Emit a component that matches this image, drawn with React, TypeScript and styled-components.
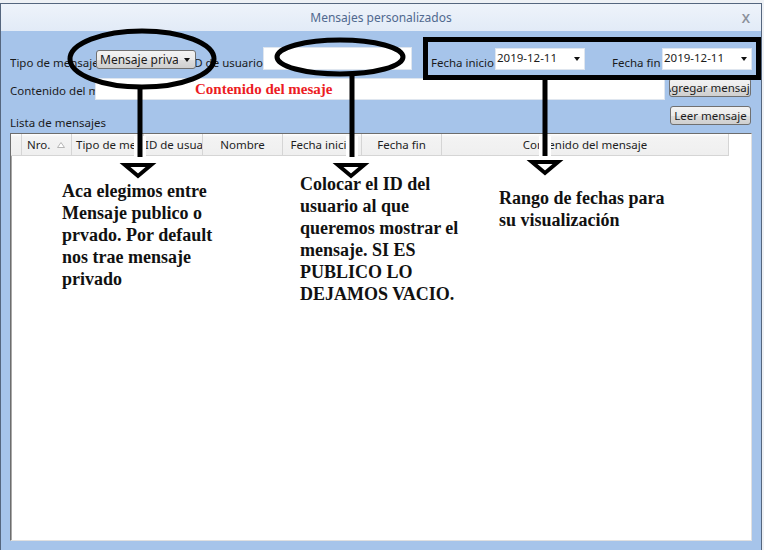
import styled, { createGlobalStyle } from "styled-components";

const GlobalStyle = createGlobalStyle`
  html, body {
    margin: 0;
    padding: 0;
  }
  body {
    background: #eef1f5;
    font-family: "Noto Sans", "Liberation Sans", sans-serif;
  }
`;

// page + dialog frame
const Stage = styled.div`
  position: relative;
  width: 764px;
  height: 550px;
  overflow: hidden;
  padding-top: 3px;
  box-sizing: border-box;
`;

const Window = styled.div`
  width: 762px;
  height: 560px;
  box-sizing: border-box;
  border: 1px solid #55667e;
  border-bottom: none;
  background: #a6c4ea;
  display: flex;
  flex-direction: column;
`;

const TitleBar = styled.div`
  height: 27px;
  flex: none;
  display: flex;
  align-items: center;
  justify-content: center;
  position: relative;
  background: linear-gradient(#eef3fa, #e2ebf7);
  color: #50698f;
  font-size: 12px;
`;

const CloseX = styled.span`
  position: absolute;
  right: 11px;
  top: 5px;
  color: #8b919b;
  font-size: 13px;
  font-weight: 600;
`;

const Client = styled.div`
  flex: 1;
  padding: 16px 9px 0 9px;
  display: flex;
  flex-direction: column;
  font-size: 11.5px;
  color: #1b1b1b;
`;

const Row = styled.div<{ $h: number; $mt: number }>`
  display: flex;
  align-items: flex-start;
  height: ${(p) => p.$h}px;
  margin-top: ${(p) => p.$mt}px;
`;

const Label = styled.div<{ $w?: number; $dy: number; $ml?: number; $right?: boolean }>`
  flex: none;
  ${(p) => (p.$w ? `width: ${p.$w}px;` : "")}
  margin-left: ${(p) => p.$ml ?? 0}px;
  padding-top: ${(p) => p.$dy}px;
  line-height: 15px;
  white-space: nowrap;
  overflow: hidden;
  display: flex;
  justify-content: ${(p) => (p.$right ? "flex-end" : "flex-start")};
`;

const Combo = styled.div`
  flex: none;
  position: relative;
  z-index: 1;
  width: 100px;
  height: 19px;
  margin-top: 3px;
  box-sizing: border-box;
  border: 1px solid #707070;
  border-radius: 3px;
  background: linear-gradient(#f3f3f3 0%, #ebebeb 50%, #dddddd 51%, #cfcfcf 100%);
  display: flex;
  align-items: center;
  padding-left: 3px;
  font-size: 12px;
  white-space: nowrap;
  overflow: hidden;
`;

const ComboText = styled.span`
  width: 78px;
  overflow: hidden;
`;

const Arrow = styled.span`
  flex: none;
  width: 0;
  height: 0;
  border-left: 3.5px solid transparent;
  border-right: 3.5px solid transparent;
  border-top: 4px solid #111;
  margin-left: auto;
  margin-right: 5px;
`;

const TextBox = styled.div<{ $w: number; $h: number }>`
  flex: none;
  width: ${(p) => p.$w}px;
  height: ${(p) => p.$h}px;
  box-sizing: border-box;
  background: #fff;
  border: 1px solid #dfe6ef;
`;

const DatePicker = styled.div`
  flex: none;
  width: 90px;
  height: 22px;
  margin-top: 1px;
  box-sizing: border-box;
  background: #fff;
  border: 1px solid #dfe6ef;
  display: flex;
  align-items: flex-start;
  padding: 1px 0 0 1px;
  font-size: 11.5px;
  line-height: 15px;
`;

const DateArrow = styled(Arrow)`
  margin-top: 7px;
  margin-right: 4px;
`;

const WinButton = styled.div<{ $w: number; $ml?: number }>`
  flex: none;
  width: ${(p) => p.$w}px;
  height: 19px;
  margin-left: ${(p) => (p.$ml === undefined ? "auto" : `${p.$ml}px`)};
  margin-right: 1px;
  box-sizing: border-box;
  border: 1px solid #707070;
  border-radius: 3px;
  background: linear-gradient(#f3f3f3 0%, #ebebeb 50%, #dddddd 51%, #cfcfcf 100%);
  display: flex;
  align-items: center;
  justify-content: center;
  white-space: nowrap;
  overflow: hidden;
  font-size: 11.5px;
`;

const ListView = styled.div`
  margin-top: 8px;
  width: 742px;
  height: 408px;
  box-sizing: border-box;
  background: #fff;
  border: 1px solid;
  border-color: #6d6d6d #e0e0e0 #e0e0e0 #6d6d6d;
  box-shadow: inset 1px 0 0 #a8a8a8;
`;

const Header = styled.div`
  display: flex;
  width: 718px;
  height: 22px;
  box-sizing: border-box;
  background: linear-gradient(#ffffff 0%, #f3f3f3 15%, #efefef 100%);
  border-bottom: 1px solid #d5d5d5;
`;

const HeaderCell = styled.div<{ $w: number; $align?: string; $pl?: number }>`
  flex: none;
  width: ${(p) => p.$w}px;
  box-sizing: border-box;
  border-right: 1px solid #d5d5d5;
  display: flex;
  align-items: center;
  justify-content: ${(p) => p.$align ?? "flex-start"};
  padding-left: ${(p) => p.$pl ?? 0}px;
  white-space: nowrap;
  overflow: hidden;
  font-size: 11.5px;
  color: #1e1e1e;
`;

// annotations pasted over the dialog
const Overlay = styled.svg`
  position: absolute;
  left: 0;
  top: 0;
  pointer-events: none;
`;

const Note = styled.div<{ $x: number; $y: number; $w: number }>`
  position: absolute;
  left: ${(p) => p.$x}px;
  top: ${(p) => p.$y}px;
  width: ${(p) => p.$w}px;
  font-family: "Liberation Serif", "Times New Roman", serif;
  font-weight: bold;
  font-size: 18px;
  line-height: 22px;
  color: #111;
`;

const RedNote = styled.div`
  position: absolute;
  left: 195px;
  top: 80px;
  font-family: "Liberation Serif", "Times New Roman", serif;
  font-weight: bold;
  font-size: 15px;
  line-height: 18px;
  color: #ec1c24;
`;

const columns = [
  { w: 11, text: "" },
  { w: 50, text: "Nro.", pl: 5, sort: true },
  { w: 72, text: "Tipo de mensaje", pl: 4 },
  { w: 59, text: "ID de usuario", pl: 1 },
  { w: 80, text: "Nombre", align: "center" },
  { w: 79, text: "Fecha inicio", align: "center" },
  { w: 80, text: "Fecha fin", align: "center" },
  { w: 287, text: "Contenido del mensaje", align: "center" },
];

const SortIcon = () => (
  <svg width="8" height="6" viewBox="0 0 8 6" style={{ marginLeft: 7 }}>
    <path d="M4 0.5 L7.5 5.5 L0.5 5.5 Z" fill="#fff" stroke="#b5b5b5" strokeWidth="1" />
  </svg>
);

const Triangle = ({ cx, top }: { cx: number; top: number }) => (
  <>
    <rect x={cx - 16} y={top - 3} width={33} height={18} fill="#fff" />
    <path
      d={`M${cx - 13} ${top + 1} L${cx + 13} ${top + 1} L${cx} ${top + 12} Z`}
      fill="#fff"
      stroke="#000"
      strokeWidth="4"
      strokeLinejoin="miter"
      strokeMiterlimit="3"
    />
  </>
);

export default function App() {
  return (
    <>
      <GlobalStyle />
      <Stage>
        <Window>
          <TitleBar>
            Mensajes personalizados
            <CloseX>X</CloseX>
          </TitleBar>
          <Client>
            <Row $h={23} $mt={0}>
              <Label $w={86} $dy={8}>Tipo de mensaje</Label>
              <Combo>
                <ComboText>Mensaje privado</ComboText>
                <Arrow />
              </Combo>
              <Label $w={67} $dy={8} $right>ID de usuario</Label>
              <TextBox $w={149} $h={23} />
              <Label $w={64} $dy={8} $ml={19}>Fecha inicio</Label>
              <DatePicker>
                2019-12-11
                <DateArrow />
              </DatePicker>
              <Label $w={50} $dy={8} $ml={27}>Fecha fin</Label>
              <DatePicker>
                2019-12-11
                <DateArrow />
              </DatePicker>
            </Row>
            <Row $h={22} $mt={8}>
              <Label $w={85} $dy={5}>Contenido del mensaje</Label>
              <TextBox $w={570} $h={22} />
              <WinButton $w={82} $ml={4}>Agregar mensaje</WinButton>
            </Row>
            <Row $h={19} $mt={6}>
              <Label $dy={9}>Lista de mensajes</Label>
              <WinButton $w={81}>Leer mensaje</WinButton>
            </Row>
            <ListView>
              <Header>
                {columns.map((c, i) => (
                  <HeaderCell key={i} $w={c.w} $align={c.align} $pl={c.pl}>
                    {c.text}
                    {c.sort && <SortIcon />}
                  </HeaderCell>
                ))}
              </Header>
            </ListView>
          </Client>
        </Window>

        <RedNote>Contenido del mesaje</RedNote>

        <Overlay width="764" height="550" viewBox="0 0 764 550">
          <ellipse cx="142" cy="59" rx="72" ry="28" fill="none" stroke="#000" strokeWidth="5" />
          <ellipse cx="340" cy="57" rx="63" ry="17" fill="none" stroke="#000" strokeWidth="5" />
          <rect x="425.5" y="39.5" width="333" height="38" fill="none" stroke="#000" strokeWidth="5" />

          <rect x="134" y="136" width="12" height="24" fill="#fff" />
          <line x1="140" y1="87" x2="140" y2="157" stroke="#000" strokeWidth="5" />
          <Triangle cx={138} top={164} />

          <rect x="346" y="136" width="12" height="24" fill="#fff" />
          <line x1="352" y1="74" x2="352" y2="157" stroke="#000" strokeWidth="5" />
          <Triangle cx={351} top={164} />

          <rect x="539" y="136" width="12" height="24" fill="#fff" />
          <line x1="545" y1="80" x2="545" y2="156" stroke="#000" strokeWidth="5" />
          <Triangle cx={545} top={161} />
        </Overlay>

        <Note $x={62} $y={180} $w={200}>
          Aca elegimos entre
          <br />
          Mensaje publico o
          <br />
          prvado. Por default
          <br />
          nos trae mensaje
          <br />
          privado
        </Note>
        <Note $x={300} $y={173} $w={200}>
          Colocar el ID del
          <br />
          usuario al que
          <br />
          queremos mostrar el
          <br />
          mensaje. SI ES
          <br />
          PUBLICO LO
          <br />
          DEJAMOS VACIO.
        </Note>
        <Note $x={499} $y={187} $w={220}>
          Rango de fechas para
          <br />
          su visualización
        </Note>
      </Stage>
    </>
  );
}
